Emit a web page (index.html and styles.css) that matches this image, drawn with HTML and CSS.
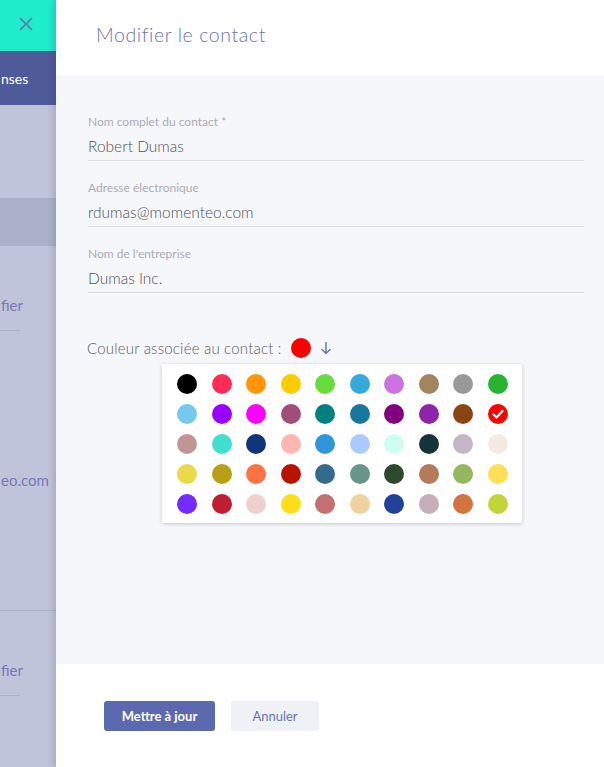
FILE: index.html
```html
<!DOCTYPE html>
<html lang="fr">
<head>
  <meta charset="UTF-8" />
  <meta name="viewport" content="width=device-width, initial-scale=1.0" />
  <title>Modifier le contact</title>
  <link rel="stylesheet" href="styles.css">
</head>
<body>
  <div class="page">
    <aside class="behind">
      <div class="behind-top">
        <svg class="close" width="14" height="14" viewBox="0 0 14 14">
          <path d="M1 1 L13 13 M13 1 L1 13" stroke="#6a6cb0" stroke-width="1.5" fill="none" />
        </svg>
      </div>
      <div class="behind-nav"><span>nses</span></div>
      <div class="behind-block"></div>
      <div class="behind-active"></div>
      <div class="behind-card">
        <div class="behind-link">fier</div>
        <div class="behind-rule"></div>
        <div class="behind-mail">eo.com</div>
      </div>
      <div class="behind-card second">
        <div class="behind-link">fier</div>
        <div class="behind-rule"></div>
      </div>
    </aside>

    <main class="panel">
      <header class="panel-head">
        <h1>Modifier le contact</h1>
      </header>

      <section class="panel-body">
        <div class="field">
          <label>Nom complet du contact *</label>
          <div class="value">Robert Dumas</div>
        </div>
        <div class="field">
          <label>Adresse électronique</label>
          <div class="value">rdumas@momenteo.com</div>
        </div>
        <div class="field">
          <label>Nom de l'entreprise</label>
          <div class="value">Dumas Inc.</div>
        </div>

        <div class="color-row">
          <span class="color-label">Couleur associée au contact :</span>
          <span class="dot current"></span>
          <svg class="arrow" width="12" height="14" viewBox="0 0 12 14">
            <path d="M6 1 V12.5 M1.5 8 L6 12.5 L10.5 8" stroke="#6b73b5" stroke-width="1.5" fill="none" />
          </svg>
        </div>

        <div class="palette" id="palette"></div>
      </section>

      <footer class="panel-foot">
        <button class="btn primary">Mettre à jour</button>
        <button class="btn ghost">Annuler</button>
      </footer>
    </main>
  </div>

  <script>
    const colors = [
      '#000000', '#ff2d55', '#ff9500', '#ffcc00', '#66dd3d', '#34aadc', '#cc73e1', '#a2845e', '#999999', '#28b432',
      '#76c9ed', '#9900ff', '#ff00ff', '#a24e7a', '#008080', '#16789e', '#800080', '#8e24aa', '#8b4513', '#ff0000',
      '#c29595', '#40e0d0', '#11337a', '#ffb6b1', '#3196d9', '#a9cbff', '#ccfff1', '#14343a', '#c4b6c6', '#f3ebe2',
      '#ecd94a', '#b8a015', '#ff7342', '#b41400', '#326b8c', '#679688', '#2d4a2c', '#b37b5a', '#95b75e', '#ffdf56',
      '#732cfb', '#be1e2f', '#f0d0cc', '#ffdd17', '#c27070', '#f0d2a0', '#224198', '#c5afb9', '#d27340', '#c5d33b'
    ];
    const selected = '#ff0000';
    const palette = document.getElementById('palette');

    colors.forEach(c => {
      const dot = document.createElement('span');
      dot.className = 'dot';
      dot.style.backgroundColor = c;
      if (c === selected) {
        dot.innerHTML = '<svg width="20" height="20" viewBox="0 0 20 20"><path d="M5.5 10.5 L8.6 13.4 L14.5 7" stroke="#fff" stroke-width="2.2" fill="none" stroke-linecap="round" stroke-linejoin="round"/></svg>';
      }
      palette.appendChild(dot);
    });
  </script>
</body>
</html>
```

FILE: styles.css
```css
* {
  box-sizing: border-box;
}
body {
  margin: 0;
  font-family: 'Lato', 'Open Sans', sans-serif;
  background-color: #ffffff;
}
.page {
  display: flex;
  width: 604px;
  height: 767px;
  overflow: hidden;
}

/* page behind the side panel */
.behind {
  width: 56px;
  flex-shrink: 0;
  overflow: hidden;
  background-color: #c0c4da;
  display: flex;
  flex-direction: column;
}
.behind-top {
  height: 51px;
  background-color: #1eecca;
  display: flex;
  align-items: center;
  justify-content: flex-end;
  padding-right: 23px;
  padding-bottom: 4px;
}
.behind-nav {
  height: 54px;
  background-color: #4f5a98;
  color: #ffffff;
  font-size: 14px;
  display: flex;
  align-items: center;
  padding-left: 1px;
  white-space: nowrap;
}
.behind-block {
  height: 93px;
}
.behind-active {
  height: 48px;
  background-color: #abb1ca;
}
.behind-card {
  height: 365px;
  border-bottom: 1px solid #aeb3cb;
  padding-top: 49px;
  display: flex;
  flex-direction: column;
  align-items: flex-start;
}
.behind-card.second {
  height: auto;
  flex: 1;
  border-bottom: none;
}
.behind-link {
  font-size: 15px;
  color: #7a78b6;
  white-space: nowrap;
  line-height: 20px;
  padding-left: 1px;
}
.behind-rule {
  width: 20px;
  height: 1px;
  background-color: #aab0c9;
  margin-top: 15px;
}
.behind-mail {
  font-size: 15px;
  color: #7a78b6;
  white-space: nowrap;
  line-height: 20px;
  margin-top: 139px;
  padding-left: 1px;
}

/* side panel */
.panel {
  flex: 1;
  display: flex;
  flex-direction: column;
  background-color: #ffffff;
  box-shadow: -3px 0 6px rgba(40, 50, 90, 0.18);
}
.panel-head {
  height: 75px;
  padding-left: 40px;
  padding-top: 22px;
}
.panel-head h1 {
  margin: 0;
  font-size: 19.5px;
  font-weight: 300;
  color: #6b73b5;
  line-height: 26px;
  letter-spacing: 0.6px;
}
.panel-body {
  height: 589px;
  background-color: #f6f7fb;
  padding: 40px 20px 0 32px;
}
.field {
  border-bottom: 1px solid #dcdde3;
  padding-bottom: 4px;
  margin-bottom: 20px;
}
.field label {
  display: block;
  font-size: 12px;
  line-height: 14px;
  color: #ababb3;
  margin-bottom: 7px;
}
.value {
  font-size: 15.5px;
  font-weight: 300;
  line-height: 20px;
  color: #505058;
}
.color-row {
  display: flex;
  align-items: center;
  height: 20px;
  margin-top: 45px;
  margin-left: -1px;
}
.color-label {
  font-size: 15px;
  font-weight: 300;
  color: #5c5c64;
  letter-spacing: 0.2px;
  margin-right: 9px;
}
.arrow {
  margin-left: 9px;
}
.dot {
  display: inline-block;
  width: 20px;
  height: 20px;
  border-radius: 50%;
  flex-shrink: 0;
}
.dot svg {
  display: block;
}
.current {
  background-color: #ff0000;
}
.palette {
  width: 360px;
  margin: 6px 0 0 74px;
  padding: 10px 15px 9px 15px;
  background-color: #ffffff;
  box-shadow: 0 1px 4px rgba(0, 0, 0, 0.2);
  display: grid;
  grid-template-columns: repeat(10, 20px);
  column-gap: 14.5px;
  row-gap: 10px;
}
.panel-foot {
  flex: 1;
  padding: 37px 0 0 48px;
  display: flex;
  gap: 16px;
  align-items: flex-start;
}
.btn {
  height: 30px;
  border: none;
  border-radius: 3px;
  font-family: 'Lato', 'Open Sans', sans-serif;
  font-size: 13px;
  cursor: pointer;
}
.primary {
  width: 111px;
  background-color: #5b6aaf;
  color: #ffffff;
  font-weight: 700;
}
.ghost {
  width: 88px;
  background-color: #eef1f6;
  color: #6b73b5;
}
```
